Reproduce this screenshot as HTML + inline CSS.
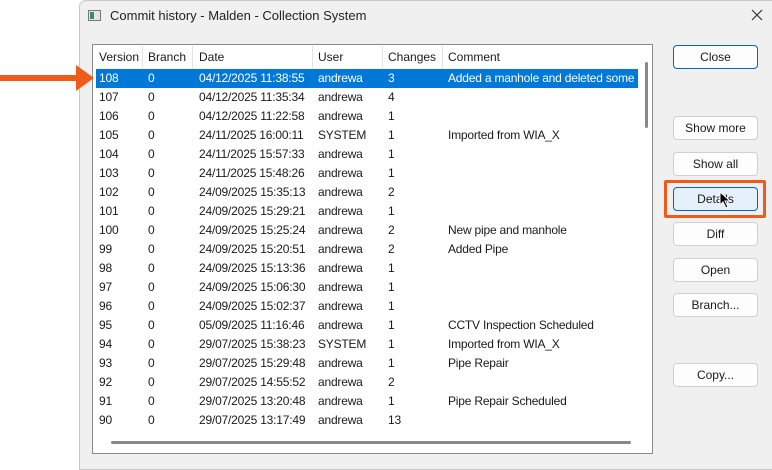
<!DOCTYPE html>
<html><head><style>
*{margin:0;padding:0;box-sizing:border-box}
body{width:772px;height:463px;background:#fff;position:relative;overflow:hidden;font-family:"Liberation Sans",sans-serif;font-size:12px;color:#1a1a1a}
.win{position:absolute;left:79px;top:0;width:700px;height:470px;background:#f0f0f0;border:1px solid #c8c8c8;border-radius:7px 0 0 0}
.title{position:absolute;left:110px;top:8px;font-size:13px;color:#222}
.ico{position:absolute;left:88px;top:10px;width:13px;height:11px;border:1px solid #777;background:#dfe6e6}
.ico:before{content:"";position:absolute;left:1px;top:1px;width:4px;height:7px;background:#3a8a7a}
.list{position:absolute;left:92px;top:44px;width:561px;height:410px;background:#fff;border:1px solid #8a8a8a}
.r{position:absolute;left:96px;width:542px;height:19px;line-height:19px;white-space:nowrap;letter-spacing:-0.2px}
.r span{position:absolute;top:0}
.sel{background:#0078d7;color:#fff}
.hd{position:absolute;top:47px;height:21px;line-height:21px;white-space:nowrap}
.sep{position:absolute;top:46px;width:1px;height:22px;background:#e3e3e3}
.btn{position:absolute;left:673px;width:85px;height:24px;background:#fdfdfd;border:1px solid #d0d0d0;border-radius:4px;text-align:center;line-height:22px;font-size:12px}
</style></head><body>
<div class="win"></div>
<div class="ico"></div>
<div class="title">Commit history - Malden - Collection System</div>
<svg style="position:absolute;left:751px;top:9px" width="12" height="12"><path d="M1 1L11 11M11 1L1 11" stroke="#333" stroke-width="1.2"/></svg>
<div class="list"></div>
<div class="hd" style="left:99px">Version</div>
<div class="hd" style="left:148px">Branch</div>
<div class="hd" style="left:199px">Date</div>
<div class="hd" style="left:318px">User</div>
<div class="hd" style="left:388px">Changes</div>
<div class="hd" style="left:448px">Comment</div>
<div class="sep" style="left:142px"></div><div class="sep" style="left:192px"></div><div class="sep" style="left:312px"></div><div class="sep" style="left:382px"></div><div class="sep" style="left:442px"></div>
<div id="rows"></div>
<div style="position:absolute;left:645px;top:62px;width:3px;height:66px;background:#888;border-radius:2px"></div>
<div style="position:absolute;left:111px;top:441px;width:520px;height:3px;background:#888;border-radius:2px"></div>
<div class="btn" style="top:45px;border:1px solid #0067c0;">Close</div>
<div class="btn" style="top:116px">Show more</div>
<div class="btn" style="top:152px">Show all</div>
<div style="position:absolute;left:664px;top:180px;width:102px;height:38px;border:3px solid #f05a1a;border-radius:2px"></div>
<div class="btn" style="top:187px;background:#e6f0fa;border-color:#0067c0">Details</div>
<div class="btn" style="top:222px">Diff</div>
<div class="btn" style="top:258px">Open</div>
<div class="btn" style="top:293px">Branch...</div>
<div class="btn" style="top:363px">Copy...</div>
<svg style="position:absolute;left:0;top:62px" width="96" height="32"><path d="M0 13H76V3L94 16L76 29V19H0Z" fill="#f05a1a"/></svg>
<svg style="position:absolute;left:719px;top:191px" width="14" height="18"><path d="M1 1L1 14L4 11L7 17L9 16L6 10L11 10Z" fill="#000" stroke="#fff" stroke-width="1"/></svg>
<script>
var d=[["108","04/12/2025 11:38:55","andrewa","3","Added a manhole and deleted some"],["107","04/12/2025 11:35:34","andrewa","4",""],["106","04/12/2025 11:22:58","andrewa","1",""],["105","24/11/2025 16:00:11","SYSTEM","1","Imported from WIA_X"],["104","24/11/2025 15:57:33","andrewa","1",""],["103","24/11/2025 15:48:26","andrewa","1",""],["102","24/09/2025 15:35:13","andrewa","2",""],["101","24/09/2025 15:29:21","andrewa","1",""],["100","24/09/2025 15:25:24","andrewa","2","New pipe and manhole"],["99","24/09/2025 15:20:51","andrewa","2","Added Pipe"],["98","24/09/2025 15:13:36","andrewa","1",""],["97","24/09/2025 15:06:30","andrewa","1",""],["96","24/09/2025 15:02:37","andrewa","1",""],["95","05/09/2025 11:16:46","andrewa","1","CCTV Inspection Scheduled"],["94","29/07/2025 15:38:23","SYSTEM","1","Imported from WIA_X"],["93","29/07/2025 15:29:48","andrewa","1","Pipe Repair"],["92","29/07/2025 14:55:52","andrewa","2",""],["91","29/07/2025 13:20:48","andrewa","1","Pipe Repair Scheduled"],["90","29/07/2025 13:17:49","andrewa","13",""]];
var h="";d.forEach(function(r,i){h+='<div class="r'+(i==0?' sel':'')+'" style="top:'+(69+i*19)+'px"><span style="left:3px">'+r[0]+'</span><span style="left:52px">0</span><span style="left:103px">'+r[1]+'</span><span style="left:222px">'+r[2]+'</span><span style="left:292px">'+r[3]+'</span><span style="left:352px">'+r[4]+'</span></div>'});
document.getElementById("rows").innerHTML=h;
</script>
</body></html>
